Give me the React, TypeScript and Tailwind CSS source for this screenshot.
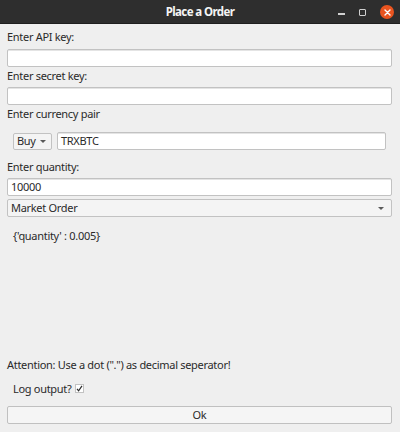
import React from "react";

const font = { fontFamily: '"Noto Sans", "Open Sans", sans-serif' };

const Field: React.FC<{ value?: string }> = ({ value }) => (
  <div className="h-[18px] w-full bg-white border border-[#c2c2c2] rounded-[2px] flex items-center px-[3px] text-[#2a2a2a] shadow-[inset_0_1px_0_#e4e4e4]">
    {value}
  </div>
);

const Caret = () => (
  <svg width="6" height="3" viewBox="0 0 6 3" className="shrink-0">
    <path d="M0 0h6L3 3z" fill="#5a5a5a" />
  </svg>
);

export default function App() {
  return (
    <div className="w-[400px] h-[432px] bg-[#efefef] flex flex-col text-[#333]" style={font}>
      <div className="h-[24px] bg-[#2e2e2e] border-b border-[#1f1f1f] flex items-center relative shrink-0">
        <div className="flex-1 text-center text-[#f4f4f4] font-bold text-[11.5px] tracking-[-0.6px]">Place a Order</div>
        <div className="absolute right-[6px] top-0 h-[24px] flex items-center gap-[14px]">
          <div className="w-[7px] h-[2px] bg-[#d0d0d0] mt-[3px]" />
          <div className="w-[7px] h-[7px] border-[1.5px] border-[#d0d0d0] rounded-[1px]" />
          <div className="w-[14px] h-[14px] rounded-full bg-[#e9541f] flex items-center justify-center">
            <svg width="7" height="7" viewBox="0 0 7 7">
              <path d="M1 1l5 5M6 1l-5 5" stroke="#fff" strokeWidth="1.4" strokeLinecap="round" />
            </svg>
          </div>
        </div>
      </div>

      <div className="flex flex-col flex-1 pl-[7px] pr-[8px] text-[11px] tracking-[-0.3px] text-[#2a2a2a]">
        <div className="h-[25px] flex items-end pb-[4px]">Enter API key:</div>
        <Field />
        <div className="h-[20px] flex items-end pb-[3px]">Enter secret key:</div>
        <Field />
        <div className="h-[20px] flex items-end pb-[3px]">Enter currency pair</div>

        <div className="flex items-center gap-[5px] pl-[6px] pr-[6px] mt-[7px]">
          <div className="h-[17px] w-[39px] bg-[#f4f4f4] border border-[#c2c2c2] rounded-[2px] flex items-center justify-between pl-[3px] pr-[5px]">
            <span>Buy</span>
            <Caret />
          </div>
          <div className="flex-1">
            <Field value="TRXBTC" />
          </div>
        </div>

        <div className="h-[28px] flex items-end pb-[3px]">Enter quantity:</div>
        <Field value="10000" />
        <div className="mt-[3px] h-[18px] w-full bg-[#f4f4f4] border border-[#c2c2c2] rounded-[2px] flex items-center justify-between pl-[3px] pr-[7px]">
          <span>Market Order</span>
          <Caret />
        </div>
        <div className="pl-[6px] mt-[11px]">{"{'quantity' : 0.005}"}</div>

        <div className="flex-1" />

        <div className="mb-[7px]">Attention: Use a dot (".") as decimal seperator!</div>
        <div className="flex items-center pl-[6px] gap-[4px]">
          <span>Log output?</span>
          <div className="w-[9px] h-[9px] bg-white border border-[#c2c2c2] flex items-center justify-center">
            <svg width="7" height="7" viewBox="0 0 7 7">
              <path d="M1 3.8l1.6 2L6 0.8" stroke="#2a2a2a" strokeWidth="1.2" fill="none" />
            </svg>
          </div>
        </div>
        <div className="mt-[9px] mb-[8px] h-[18px] w-full bg-[#f5f5f5] border border-[#c0c0c0] rounded-[2px] flex items-center justify-center">
          Ok
        </div>
      </div>
    </div>
  );
}
